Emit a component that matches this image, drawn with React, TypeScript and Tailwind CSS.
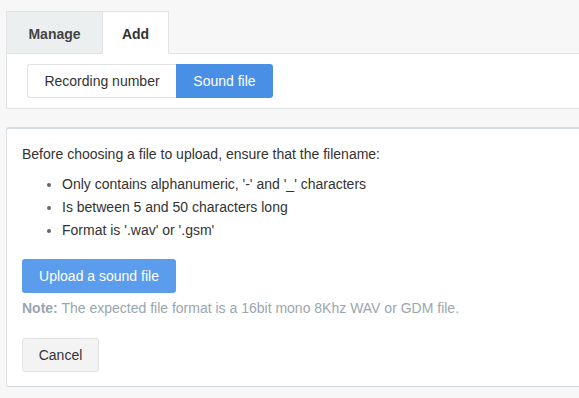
export default function App() {
  const rules = [
    "Only contains alphanumeric, '-' and '_' characters",
    "Is between 5 and 50 characters long",
    "Format is '.wav' or '.gsm'",
  ];

  return (
    <div
      className="w-full min-h-[398px] overflow-hidden bg-[#f7f7f7] text-[14px] text-[#333]"
      style={{ fontFamily: "'Liberation Sans', Arial, sans-serif" }}
    >
      <div className="pt-[11px] pl-[6px] -mr-[20px]">
        {/* Tabs */}
        <div className="flex">
          <div className="w-[96px] h-[43px] -mb-px pt-[3px] flex items-center justify-center bg-[#ecefef] border border-[#dfe3e3] border-r-0 font-bold text-[#444]">
            Manage
          </div>
          <div className="w-[67px] h-[43px] -mb-px pt-[3px] flex items-center justify-center bg-white border border-[#dfe3e3] border-b-white font-bold text-[#333] relative z-10">
            Add
          </div>
        </div>

        {/* Mode switch */}
        <div className="bg-white border border-[#dfe3e3] pl-[20px] pt-[10px] pb-[10px]">
          <div className="flex h-[34px]">
            <button className="w-[149px] h-full pt-px bg-white border border-[#dfe3e3] border-r-0 rounded-l-[3px] text-[#333]">
              Recording number
            </button>
            <button className="w-[97px] h-full pt-px bg-[#4a8fe6] rounded-r-[3px] text-white">
              Sound file
            </button>
          </div>
        </div>

        {/* Upload card */}
        <div className="mt-[18px] bg-white border border-[#dfe4e6] border-t-2 border-t-[#d3dee3] border-b-[#cfd8dc] rounded-[3px] pl-[15px] pt-[14px] pb-[14px] leading-[22px]">
          <p>Before choosing a file to upload, ensure that the filename:</p>
          <ul className="list-disc pl-[40px] mt-[8px] leading-[23px] marker:text-[#666]">
            {rules.map((r) => (
              <li key={r}>{r}</li>
            ))}
          </ul>
          <button className="mt-[17px] w-[154px] h-[34px] bg-[#5b9cec] rounded-[3px] text-white">
            Upload a sound file
          </button>
          <p className="mt-[4px] text-[#9aa6ae]">
            <span className="font-bold">Note:</span> The expected file format is a 16bit mono 8Khz WAV or GDM file.
          </p>
          <button className="mt-[19px] w-[77px] h-[34px] bg-[#f3f3f3] border border-[#e2e2e2] rounded-[3px] text-[#333]">
            Cancel
          </button>
        </div>
      </div>
    </div>
  );
}
